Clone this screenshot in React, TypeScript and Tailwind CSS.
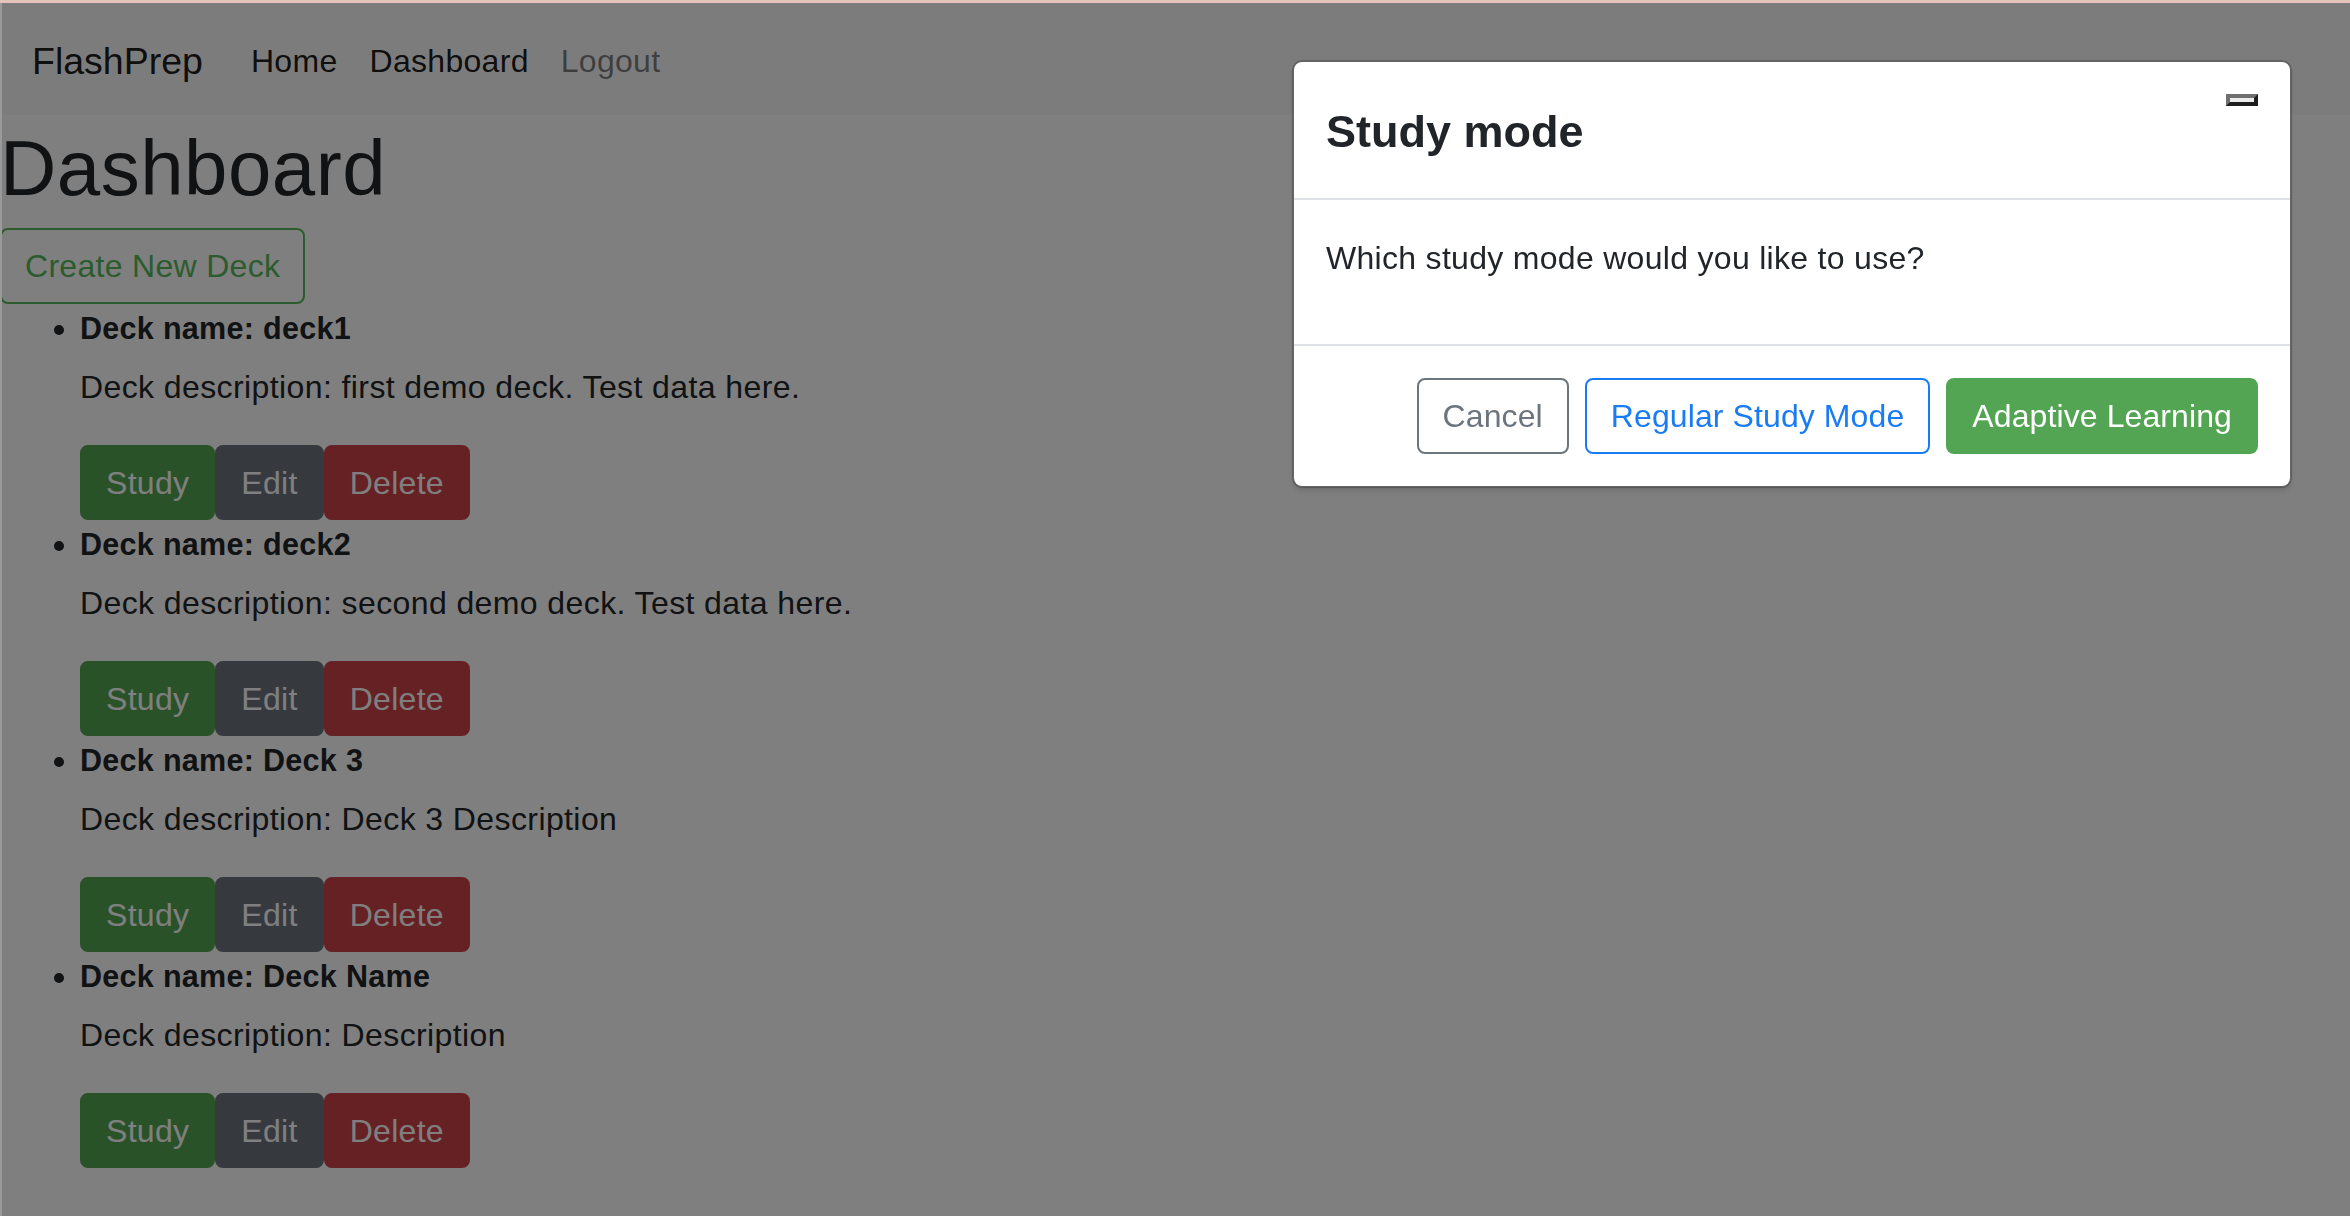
const decks = [
  { name: "deck1", description: "first demo deck. Test data here." },
  { name: "deck2", description: "second demo deck. Test data here." },
  { name: "Deck 3", description: "Deck 3 Description" },
  { name: "Deck Name", description: "Description" },
];

type Deck = { name: string; description: string };

function DeckItem({ deck }: { deck: Deck }) {
  return (
    <li>
      <div className="h-[48px] text-[30.5px] font-bold leading-[48px]">
        Deck name: {deck.name}
      </div>
      <p className="mt-[11px] h-[48px] leading-[48px] tracking-[0.4px]">
        Deck description: {deck.description}
      </p>
      <div className="mt-[34px] flex">
        <button className="h-[75px] rounded-[8px] border-2 border-[#53a553] bg-[#53a553] px-[24px] text-white">
          Study
        </button>
        <button className="h-[75px] rounded-[8px] border-2 border-[#6c757d] bg-[#6c757d] px-[24px] text-white">
          Edit
        </button>
        <button className="h-[75px] rounded-[8px] border-2 border-[#cc4248] bg-[#cc4248] px-[24px] text-white">
          Delete
        </button>
      </div>
    </li>
  );
}

export default function App() {
  return (
    <div className="relative min-h-screen bg-white font-['Liberation_Sans',Arial,sans-serif] text-[32px] leading-[48px] tracking-[0.3px] text-[#212529]">
      <div className="h-[3px] bg-[#e5c3bb]" />

      <nav className="flex h-[112px] items-center bg-[#f8f9fa] px-[32px] pt-[3px]">
        <span className="mr-[32px] text-[37.5px] leading-[60px] tracking-normal text-black/90">
          FlashPrep
        </span>
        <a className="px-[16px] text-black/90">Home</a>
        <a className="px-[16px] text-black/90">Dashboard</a>
        <a className="px-[16px] text-black/50">Logout</a>
      </nav>

      <main>
        <h1 className="mt-[6px] mb-[13px] text-[78px] leading-[94px] font-normal tracking-[0.5px]">
          Dashboard
        </h1>
        <button className="h-[76px] rounded-[8px] border-2 border-[#58b85c] px-[23px] text-[#58b85c]">
          Create New Deck
        </button>
        <ul className="list-disc pl-[80px]">
          {decks.map((deck) => (
            <DeckItem key={deck.name} deck={deck} />
          ))}
        </ul>
      </main>

      {/* backdrop */}
      <div className="fixed inset-x-0 top-[3px] bottom-0 bg-black/50" />
      <div className="fixed left-0 top-[3px] bottom-0 w-[2px] bg-[#9a9a9a]" />

      {/* study mode modal */}
      <div className="fixed left-[1292px] top-[60px] w-[1000px] rounded-[10px] border-2 border-black/20 bg-white bg-clip-padding shadow-md">
        <div className="flex items-start justify-between border-b-2 border-[#dee2e6] p-[32px]">
          <h4 className="pt-[3px] text-[45px] leading-[69px] font-bold tracking-normal">
            Study mode
          </h4>
          <button className="h-[12px] w-[32px] border-[4px] border-t-[#707070] border-l-[#707070] border-r-[#1e1e1e] border-b-[#1e1e1e] bg-[#ececec]" />
        </div>
        <div className="border-b-2 border-[#dee2e6] p-[32px]">
          <p className="mt-[2px] mb-[30px]">Which study mode would you like to use?</p>
        </div>
        <div className="flex justify-end gap-[16px] p-[32px] tracking-[0.1px]">
          <button className="h-[76px] rounded-[8px] border-2 border-[#6c757d] px-[24px] text-[#6c757d]">
            Cancel
          </button>
          <button className="h-[76px] rounded-[8px] border-2 border-[#1a7cf5] px-[24px] text-[#1a7cf5]">
            Regular Study Mode
          </button>
          <button className="h-[76px] rounded-[8px] border-2 border-[#53a553] bg-[#53a553] px-[24px] text-white">
            Adaptive Learning
          </button>
        </div>
      </div>
    </div>
  );
}
